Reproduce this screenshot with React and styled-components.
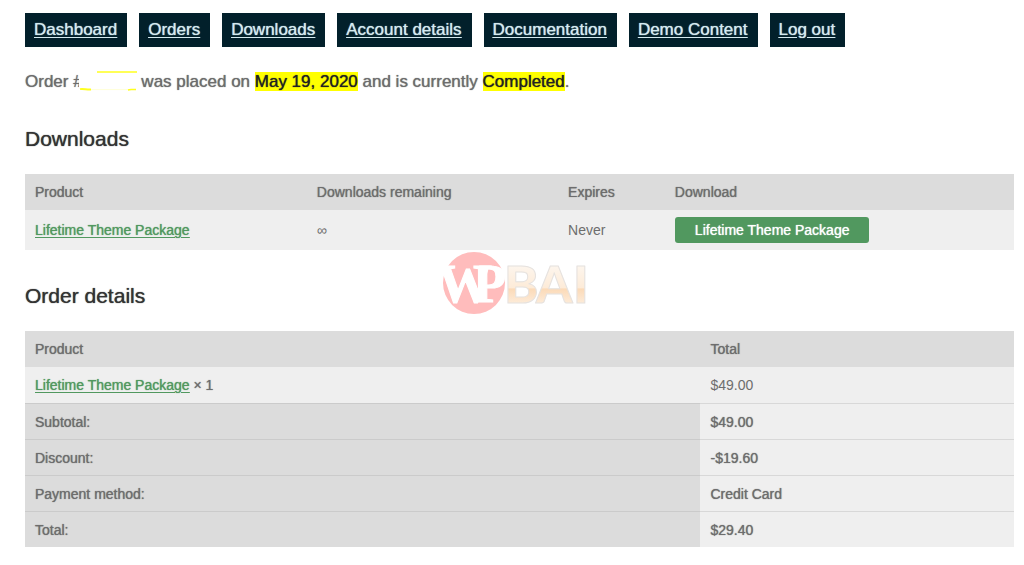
import styled, { createGlobalStyle, css } from "styled-components";

const navItems = [
	"Dashboard",
	"Orders",
	"Downloads",
	"Account details",
	"Documentation",
	"Demo Content",
	"Log out",
];

const totals = [
	{ label: "Subtotal:", value: "$49.00" },
	{ label: "Discount:", value: "-$19.60" },
	{ label: "Payment method:", value: "Credit Card" },
	{ label: "Total:", value: "$29.40" },
];

function HiddenNumber() {
	return (
		<Redaction width="58" height="22" viewBox="0 0 58 22" aria-hidden="true">
			<rect width="58" height="22" fill="#fff" />
			<path d="M18 0.9H58" stroke="#ffff1e" strokeWidth="1.5" />
			<path d="M1 18.2C4 17.4 8 18.9 12 18.5" stroke="#ffff1e" strokeWidth="1.9" fill="none" />
			<path d="M12 18.6H49" stroke="#ffffd8" strokeWidth="1" />
			<path d="M49 19L52 18.4H57" stroke="#ffff1e" strokeWidth="1.5" fill="none" />
		</Redaction>
	);
}

function Watermark() {
	return (
		<Mark width="158" height="64" viewBox="-4 0 158 64" aria-hidden="true">
			<defs>
				<linearGradient id="gold" gradientUnits="userSpaceOnUse" x1="0" y1="14" x2="0" y2="52">
					<stop offset="0" stopColor="#fdf6ee" />
					<stop offset="0.6" stopColor="#fdebd8" />
					<stop offset="0.63" stopColor="#fbdab8" />
					<stop offset="1" stopColor="#fdebd8" />
				</linearGradient>
			</defs>
			<circle cx="37" cy="32" r="31" fill="#ffbcbc" />
			<Serif x="1 36" y="51">
				WP
			</Serif>
			<Sans x="67 99 136" y="52">
				BAI
			</Sans>
		</Mark>
	);
}

function App() {
	return (
		<Page>
			<GlobalStyle />
			<Nav>
				{navItems.map((item) => (
					<NavLink key={item} href="#">
						{item}
					</NavLink>
				))}
			</Nav>

			<Status>
				Order #<HiddenNumber /> was placed on <Highlight>May 19, 2020</Highlight>{" "}
				and is currently <Highlight>Completed</Highlight>.
			</Status>

			<Title>Downloads</Title>
			<Table>
				<colgroup>
					<Col $width="28.5%" />
					<Col $width="25.4%" />
					<Col $width="10.8%" />
					<Col />
				</colgroup>
				<thead>
					<tr>
						<Th scope="col">Product</Th>
						<Th scope="col">Downloads remaining</Th>
						<Th scope="col">Expires</Th>
						<Th scope="col">Download</Th>
					</tr>
				</thead>
				<tbody>
					<tr>
						<Td $tall>
							<ProductLink href="#">Lifetime Theme Package</ProductLink>
						</Td>
						<Td $tall>∞</Td>
						<Td $tall>Never</Td>
						<Td $tall>
							<DownloadButton type="button">Lifetime Theme Package</DownloadButton>
						</Td>
					</tr>
				</tbody>
			</Table>

			<Title>Order details</Title>
			<Table>
				<colgroup>
					<Col $width="68.3%" />
					<Col />
				</colgroup>
				<thead>
					<tr>
						<Th scope="col">Product</Th>
						<Th scope="col">Total</Th>
					</tr>
				</thead>
				<tbody>
					<tr>
						<Td>
							<ProductLink href="#">Lifetime Theme Package</ProductLink>{" "}
							<Quantity>× 1</Quantity>
						</Td>
						<Td>$49.00</Td>
					</tr>
				</tbody>
				<tfoot>
					{totals.map(({ label, value }) => (
						<tr key={label}>
							<Th scope="row" $line>
								{label}
							</Th>
							<Td $line $strong>
								{value}
							</Td>
						</tr>
					))}
				</tfoot>
			</Table>
			<Watermark />
		</Page>
	);
}

const GlobalStyle = createGlobalStyle`
	body {
		margin: 0;
		background: #fff;
		color: #6d6d6d;
		font-family: "Liberation Sans", Arial, sans-serif;
	}
`;

/* thickens the regular weight without changing its widths */
const heavy = css`
	text-shadow: 0 0 1px currentColor;
`;

const Page = styled.main`
	padding: 13px 10px 17px 25px;
`;

const Nav = styled.nav`
	display: flex;
	flex-wrap: wrap;
	gap: 12px;
`;

const NavLink = styled.a`
	padding: 7px 10px 7px 9px;
	background: #02202b;
	color: #d5eaf0;
	font-size: 17px;
	line-height: 20px;
	text-underline-offset: 2px;
	${heavy}
	&:hover {
		color: white;
	}
`;

const Status = styled.p`
	margin: 24px 0 0;
	font-size: 17px;
	line-height: 22px;
	${heavy}
`;

const Highlight = styled.mark`
	background: #ffff00;
	color: #222;
`;

const Redaction = styled.svg`
	display: inline-block;
	margin-left: -4px;
	vertical-align: top;
`;

const Title = styled.h2`
	margin: 34px 0 23px;
	color: #333;
	font-size: 21px;
	font-weight: normal;
	line-height: 24px;
	${heavy}
`;

const Table = styled.table`
	width: 100%;
	table-layout: fixed;
	border-spacing: 0;
	font-size: 14px;
	line-height: 20px;
`;

const Col = styled.col`
	width: ${(props) => props.$width || "auto"};
`;

const Th = styled.th`
	padding: 8px 10px ${(props) => (props.$line ? "7px" : "8px")};
	background: #dcdcdc;
	font-weight: normal;
	text-align: left;
	border-top: ${(props) => (props.$line ? "1px solid #cbcbcb" : "0")};
	${heavy}
`;

const Td = styled.td`
	padding: ${(props) => (props.$tall ? "7px" : "8px")} 10px
		${(props) => (props.$tall || props.$line ? "7px" : "8px")};
	background: #efefef;
	border-top: ${(props) => (props.$line ? "1px solid #d8d8d8" : "0")};
	${(props) => props.$strong && heavy}
`;

const ProductLink = styled.a`
	color: #51985f;
	text-underline-offset: 2px;
	${heavy}
`;

const Quantity = styled.span`
	${heavy}
`;

const DownloadButton = styled.button`
	display: block;
	padding: 3px 20px;
	border: 0;
	border-radius: 3px;
	background: #51985f;
	color: white;
	font: inherit;
	cursor: pointer;
	${heavy}
	&:hover {
		background: #458552;
	}
`;

const Mark = styled.svg`
	position: fixed;
	top: 50%;
	left: 50%;
	transform: translate(-50%, -50%);
	pointer-events: none;
`;

const Serif = styled.text`
	font-family: "Liberation Serif", serif;
	font-size: 54px;
	font-weight: bold;
	fill: #fff;
	stroke: #fff;
	stroke-width: 1px;
`;

const Sans = styled.text`
	font-family: Lato, sans-serif;
	font-size: 52px;
	font-weight: 900;
	fill: url(#gold);
	stroke: #e6e2df;
	stroke-width: 1px;
	stroke-linejoin: round;
`;

export default App;
